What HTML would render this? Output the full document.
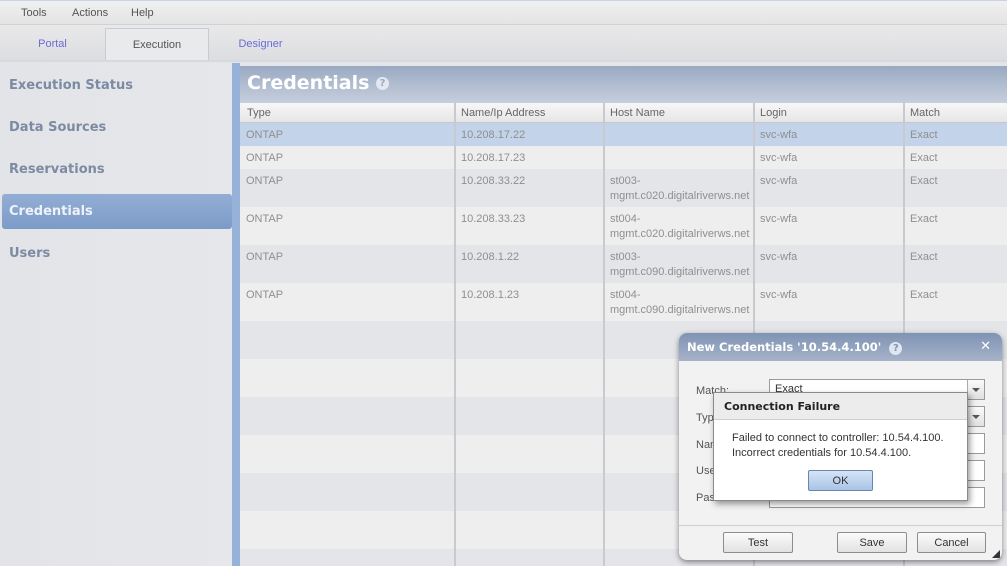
<!DOCTYPE html><html><head><style>
*{margin:0;padding:0;box-sizing:border-box}
body{width:1007px;height:566px;overflow:hidden;position:relative;background:#e4e5e9;font-family:"Liberation Sans",sans-serif;font-size:11px;color:#8a8a8a}
.a{position:absolute}
.menu{left:0;top:0;width:1007px;height:25px;background:linear-gradient(#f0f0f0,#e4e4e4);border-bottom:1px solid #cfd3d8;border-top:1px solid #c8d4e4}
.menu span{position:absolute;top:6px;color:#555;font-size:11px}
.tabs{left:0;top:25px;width:1007px;height:37px;background:linear-gradient(#e9e9ea,#dcdde0);border-bottom:2px solid #d6d9de}
.tab{top:3px;height:32px;line-height:33px;text-align:center;font-size:11px}
.side{left:0;top:63px;width:232px;height:503px;background:linear-gradient(90deg,#e2e4e8,#e6e7ea)}
.side div{position:absolute;left:9px;font-family:"DejaVu Sans",sans-serif;font-weight:bold;font-size:13px;color:#7d8aa3}
.strip{left:232px;top:63px;width:8px;height:503px;background:#96b2d8}
.ph{left:240px;top:66px;width:767px;height:37px;background:linear-gradient(#9aa9c3,#c6cedc);color:#fff;font-family:"DejaVu Sans",sans-serif;font-weight:bold;font-size:19px;padding:6px 7px}
.th{left:240px;top:103px;width:767px;height:20px;background:linear-gradient(#f7f7f7,#e6e6e6);border-bottom:1px solid #c8c8c8}
.th span{position:absolute;top:4px;color:#666}
.row{left:240px;width:767px}
.cell{position:absolute;top:5px;line-height:15px;color:#8f8f8f;white-space:nowrap}
.vl{top:103px;width:2px;height:463px;background:#c9cacd}
.dlg{left:679px;top:333px;width:323px;height:227px;background:#f2f2f2;border-radius:8px;box-shadow:0 2px 6px rgba(0,0,0,.45);overflow:hidden}
.dh{height:28px;background:linear-gradient(#7f93b3,#a6b3c9);color:#fff;font-family:"DejaVu Sans",sans-serif;font-weight:bold;font-size:11.5px;padding:7px 8px}
.btn{position:absolute;height:21px;border:1px solid #8d8d8d;border-radius:2px;background:linear-gradient(#fbfbfb,#e2e2e2);text-align:center;line-height:20px;color:#333;font-size:11px}
.inp{position:absolute;left:90px;width:216px;height:21px;border:1px solid #9a9a9a;background:#fff}
.dd{position:absolute;right:0;top:0;width:17px;height:19px;border-left:1px solid #aaa;background:linear-gradient(#fafafa,#e0e0e0)}
.dd:after{content:"";position:absolute;left:4px;top:8px;border:4px solid transparent;border-top:4px solid #555}
.lbl{position:absolute;left:17px;color:#555}
.al{left:713px;top:392px;width:255px;height:109px;background:#fff;border:1px solid #8a8a8a;box-shadow:2px 3px 6px rgba(0,0,0,.4)}
</style></head><body>
<div class="a menu"><span style="left:21px">Tools</span><span style="left:72px">Actions</span><span style="left:131px">Help</span></div>
<div class="a tabs">
<div class="a tab" style="left:0;width:105px;color:#6b6bd8">Portal</div>
<div class="a tab" style="left:105px;width:104px;background:#e9eaec;border:1px solid #c8ccd2;border-bottom:none;color:#555">Execution</div>
<div class="a tab" style="left:209px;width:103px;color:#6b6bd8">Designer</div>
</div>
<div class="a side">
<div style="top:15px">Execution Status</div>
<div style="top:57px">Data Sources</div>
<div style="top:99px">Reservations</div>
<div style="top:131px;left:2px;width:230px;height:35px;background:linear-gradient(#93aed5,#7c9bc8);border-radius:3px;color:#eef2f8;padding:10px 7px">Credentials</div>
<div style="top:183px">Users</div>
</div>
<div class="a strip"></div>
<div class="a ph">Credentials <span style="display:inline-block;width:13px;height:13px;border-radius:50%;background:#e4e8ef;color:#9aa9c3;font-size:10px;text-align:center;line-height:13px;vertical-align:middle">?</span></div>
<div class="a th"><span style="left:7px">Type</span><span style="left:221px">Name/Ip Address</span><span style="left:370px">Host Name</span><span style="left:520px">Login</span><span style="left:670px">Match</span></div>

<div class="a row" style="top:123px;height:23px;background:#c3d3e9"><span class="cell" style="left:6px">ONTAP</span><span class="cell" style="left:221px">10.208.17.22</span><span class="cell" style="left:520px">svc-wfa</span><span class="cell" style="left:670px">Exact</span></div>
<div class="a row" style="top:146px;height:23px;background:#eeeeee"><span class="cell" style="left:6px">ONTAP</span><span class="cell" style="left:221px">10.208.17.23</span><span class="cell" style="left:520px">svc-wfa</span><span class="cell" style="left:670px">Exact</span></div>
<div class="a row" style="top:169px;height:38px;background:#e4e5e9"><span class="cell" style="left:6px">ONTAP</span><span class="cell" style="left:221px">10.208.33.22</span><span class="cell" style="left:370px">st003-<br>mgmt.c020.digitalriverws.net</span><span class="cell" style="left:520px">svc-wfa</span><span class="cell" style="left:670px">Exact</span></div>
<div class="a row" style="top:207px;height:38px;background:#eeeeee"><span class="cell" style="left:6px">ONTAP</span><span class="cell" style="left:221px">10.208.33.23</span><span class="cell" style="left:370px">st004-<br>mgmt.c020.digitalriverws.net</span><span class="cell" style="left:520px">svc-wfa</span><span class="cell" style="left:670px">Exact</span></div>
<div class="a row" style="top:245px;height:38px;background:#e4e5e9"><span class="cell" style="left:6px">ONTAP</span><span class="cell" style="left:221px">10.208.1.22</span><span class="cell" style="left:370px">st003-<br>mgmt.c090.digitalriverws.net</span><span class="cell" style="left:520px">svc-wfa</span><span class="cell" style="left:670px">Exact</span></div>
<div class="a row" style="top:283px;height:38px;background:#eeeeee"><span class="cell" style="left:6px">ONTAP</span><span class="cell" style="left:221px">10.208.1.23</span><span class="cell" style="left:370px">st004-<br>mgmt.c090.digitalriverws.net</span><span class="cell" style="left:520px">svc-wfa</span><span class="cell" style="left:670px">Exact</span></div>
<div class="a row" style="top:359px;height:38px;background:#eeeeee"></div>
<div class="a row" style="top:435px;height:38px;background:#eeeeee"></div>
<div class="a row" style="top:511px;height:38px;background:#eeeeee"></div>
<div class="a vl" style="left:454px"></div><div class="a vl" style="left:603px"></div><div class="a vl" style="left:753px"></div><div class="a vl" style="left:903px"></div>

<div class="a dlg">
<div class="dh">New Credentials '10.54.4.100' <span style="display:inline-block;width:13px;height:13px;border-radius:50%;background:#dfe6f1;color:#7f93b3;font-size:10px;text-align:center;line-height:13px;margin-left:4px">?</span><span style="position:absolute;right:11px;top:6px;font-size:13px">✕</span></div>
<span class="lbl" style="top:52px">Match:</span><div class="inp" style="top:46px;padding:3px 5px;color:#333">Exact<div class="dd"></div></div>
<span class="lbl" style="top:79px">Typ</span><div class="inp" style="top:73px"><div class="dd"></div></div>
<span class="lbl" style="top:106px">Nam</span><div class="inp" style="top:100px"></div>
<span class="lbl" style="top:132px">Use</span><div class="inp" style="top:127px"></div>
<span class="lbl" style="top:159px">Pas</span><div class="inp" style="top:154px"></div>
<div class="a" style="left:0;top:192px;width:323px;height:1px;background:#cfcfcf"></div>
<div class="btn" style="left:44px;top:199px;width:70px">Test</div>
<div class="btn" style="left:158px;top:199px;width:70px">Save</div>
<div class="btn" style="left:238px;top:199px;width:69px">Cancel</div>
<div class="a" style="right:2px;bottom:2px;width:0;height:0;border-left:8px solid transparent;border-bottom:8px solid #333"></div>
</div>
<div class="a al">
<div style="height:27px;background:#ececec;border-bottom:1px solid #cfcfcf;padding:7px 10px;font-family:'DejaVu Sans',sans-serif;font-weight:bold;font-size:11px;color:#222">Connection Failure</div>
<div style="padding:11px 18px 0;color:#333;line-height:15px;white-space:nowrap">Failed to connect to controller: 10.54.4.100.<br>Incorrect credentials for 10.54.4.100.</div>
<div class="btn" style="left:94px;top:77px;width:65px;background:linear-gradient(#d6e4f6,#a9c4e6);border-color:#6a86ad">OK</div>
</div>
</body></html>
